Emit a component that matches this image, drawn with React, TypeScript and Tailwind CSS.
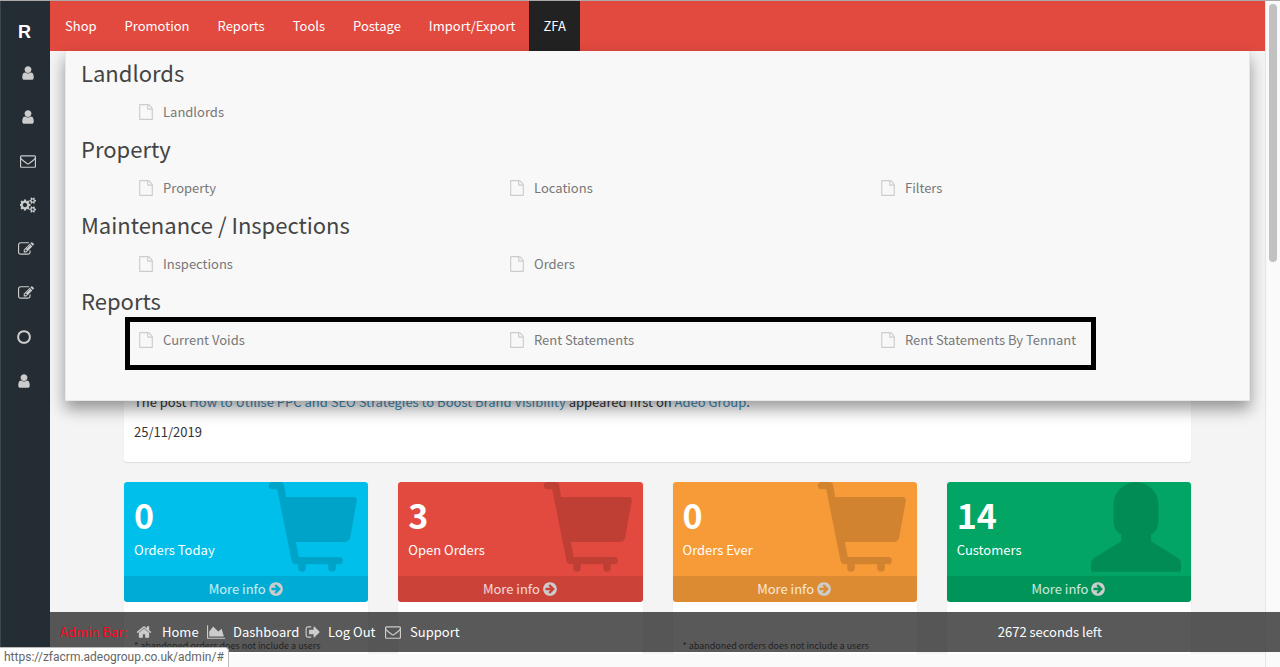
import React, { FC } from 'react'


// icon paths
const paths = {
  user: 'M1536 1399q0 109-62.5 187t-150.5 78h-854q-88 0-150.5-78t-62.5-187q0-85 8.5-160.5t31.5-152 58.5-131 94-89 134.5-34.5q131 128 313 128t313-128q76 0 134.5 34.5t94 89 58.5 131 31.5 152 8.5 160.5zm-256-887q0 159-112.5 271.5t-271.5 112.5-271.5-112.5-112.5-271.5 112.5-271.5 271.5-112.5 271.5 112.5 112.5 271.5z',
  envelope: 'M1664 1504v-768q-32 36-69 66-268 206-426 338-51 43-83 67t-86.5 48.5-102.5 24.5h-2q-48 0-102.5-24.5t-86.5-48.5-83-67q-158-132-426-338-37-30-69-66v768q0 13 9.5 22.5t22.5 9.5h1472q13 0 22.5-9.5t9.5-22.5zm0-1051v-24.5l-.5-13-3-12.5-5.5-9-9-7.5-14-2.5h-1472q-13 0-22.5 9.5t-9.5 22.5q0 168 147 284 193 152 401 317 6 5 35 29.5t46 37.5 44.5 31.5 50.5 27.5 43 9h2q20 0 43-9t50.5-27.5 44.5-31.5 46-37.5 35-29.5q208-165 401-317 54-43 100.5-115.5t46.5-131.5zm128-37v1088q0 66-47 113t-113 47h-1472q-66 0-113-47t-47-113v-1088q0-66 47-113t113-47h1472q66 0 113 47t47 113z',
  cogs: 'M832 896q0-106-75-181t-181-75-181 75-75 181 75 181 181 75 181-75 75-181zm768 512q0-52-38-90t-90-38-90 38-38 90q0 53 37.5 90.5t90.5 37.5 90.5-37.5 37.5-90.5zm0-1024q0-52-38-90t-90-38-90 38-38 90q0 53 37.5 90.5t90.5 37.5 90.5-37.5 37.5-90.5zm-384 421v185q0 10-7 19.5t-16 10.5l-155 24q-11 35-32 76 34 48 90 115 7 11 7 20 0 12-7 19-23 30-82.5 89.5t-78.5 59.5q-11 0-21-7l-115-90q-37 19-77 31-11 108-23 155-7 24-30 24h-186q-11 0-20-7.5t-10-17.5l-23-153q-34-10-75-31l-118 89q-7 7-20 7-11 0-21-8-144-133-144-160 0-9 7-19 10-14 41-53t47-61q-23-44-35-82l-152-24q-10-1-17-9.5t-7-19.5v-185q0-10 7-19.5t16-10.5l155-24q11-35 32-76-34-48-90-115-7-11-7-20 0-12 7-20 22-30 82-89t79-59q11 0 21 7l115 90q34-18 77-32 11-108 23-154 7-24 30-24h186q11 0 20 7.5t10 17.5l23 153q34 10 75 31l118-89q8-7 20-7 11 0 21 8 144 133 144 160 0 8-7 19-12 16-42 54t-45 60q23 48 34 82l152 23q10 2 17 10.5t7 19.5zm640 533v140q0 16-149 31-12 27-30 52 51 113 51 138 0 4-4 7-122 71-124 71-8 0-46-47t-52-68q-20 2-30 2t-30-2q-14 21-52 68t-46 47q-2 0-124-71-4-3-4-7 0-25 51-138-18-25-30-52-149-15-149-31v-140q0-16 149-31 13-29 30-52-51-113-51-138 0-4 4-7 4-2 35-20t59-34 30-16q8 0 46 46.5t52 67.5q20-2 30-2t30 2q51-71 92-112l6-2q4 0 124 70 4 3 4 7 0 25-51 138 17 23 30 52 149 15 149 31zm0-1024v140q0 16-149 31-12 27-30 52 51 113 51 138 0 4-4 7-122 71-124 71-8 0-46-47t-52-68q-20 2-30 2t-30-2q-14 21-52 68t-46 47q-2 0-124-71-4-3-4-7 0-25 51-138-18-25-30-52-149-15-149-31v-140q0-16 149-31 13-29 30-52-51-113-51-138 0-4 4-7 4-2 35-20t59-34 30-16q8 0 46 46.5t52 67.5q20-2 30-2t30 2q51-71 92-112l6-2q4 0 124 70 4 3 4 7 0 25-51 138 17 23 30 52 149 15 149 31z',
  edit: 'M888 1184l116-116-152-152-116 116v56h96v96h56zm440-720q-16-16-33 1l-350 350q-17 17-1 33t33-1l350-350q17-17 1-33zm80 594v190q0 119-84.5 203.5t-203.5 84.5h-832q-119 0-203.5-84.5t-84.5-203.5v-832q0-119 84.5-203.5t203.5-84.5h832q63 0 117 25 15 7 18 23 3 17-9 29l-49 49q-14 14-32 8-23-6-45-6h-832q-66 0-113 47t-47 113v832q0 66 47 113t113 47h832q66 0 113-47t47-113v-126q0-13 9-22l64-64q15-15 35-7t20 29zm-96-738l288 288-672 672h-288v-288zm444 132l-92 92-288-288 92-92q28-28 68-28t68 28l152 152q28 28 28 68t-28 68z',
  circle: 'M896 352q-148 0-273 73t-198 198-73 273 73 273 198 198 273 73 273-73 198-198 73-273-73-273-198-198-273-73zm768 544q0 209-103 385.5t-279.5 279.5-385.5 103-385.5-103-279.5-279.5-103-385.5 103-385.5 279.5-279.5 385.5-103 385.5 103 279.5 279.5 103 385.5z',
  file: 'M1596 380q28 28 48 76t20 88v1152q0 40-28 68t-68 28h-1344q-40 0-68-28t-28-68v-1600q0-40 28-68t68-28h896q40 0 88 20t76 48zm-444-244v376h376q-10-29-22-41l-313-313q-12-12-41-22zm384 1528v-1024h-416q-40 0-68-28t-28-68v-416h-768v1536h1280z',
  arrow: 'M1413 896q0-27-18-45l-91-91-362-362q-18-18-45-18t-45 18l-91 91q-18 18-18 45t18 45l189 189h-502q-26 0-45 19t-19 45v128q0 26 19 45t45 19h502l-189 189q-19 19-19 45t19 45l91 91q18 18 45 18t45-18l362-362 91-91q18-18 18-45zm251 0q0 209-103 385.5t-279.5 279.5-385.5 103-385.5-103-279.5-279.5-103-385.5 103-385.5 279.5-279.5 385.5-103 385.5 103 279.5 279.5 103 385.5z',
  home: 'M1472 992v480q0 26-19 45t-45 19h-384v-384h-256v384h-384q-26 0-45-19t-19-45v-480q0-1 .5-3t.5-3l575-474 575 474q1 2 1 6zm223-69l-62 74q-8 9-21 11h-3q-13 0-21-7l-692-577-692 577q-12 8-24 7-13-2-21-11l-62-74q-8-10-7-23.5t11-21.5l719-599q32-26 76-26t76 26l244 204v-195q0-14 9-23t23-9h192q14 0 23 9t9 23v408l219 182q10 8 11 21.5t-7 23.5z',
  chart: 'M2048 1536v128h-2048v-1536h128v1408h1920zm-384-1024l256 896h-1664v-576l448-576 576 576z',
  signOut: 'M704 1440q0 4 1 20t.5 26.5-3 23.5-10 19.5-20.5 6.5h-320q-119 0-203.5-84.5t-84.5-203.5v-704q0-119 84.5-203.5t203.5-84.5h320q13 0 22.5 9.5t9.5 22.5q0 4 1 20t.5 26.5-3 23.5-10 19.5-20.5 6.5h-320q-66 0-113 47t-47 113v704q0 66 47 113t113 47h312l11.5 1 11.5 3 8 5.5 7 9 2 13.5zm928-544q0 26-19 45l-544 544q-19 19-45 19t-45-19-19-45v-288h-448q-26 0-45-19t-19-45v-384q0-26 19-45t45-19h448v-288q0-26 19-45t45-19 45 19l544 544q19 19 19 45z',
  bigCart: 'M11 0H34Q44 0 46 10L52 45H254Q265 45 264 57L244 167Q240 180 228 180H81L90 225H211a11 11 0 0 1 0 22h-10v11a11 11 0 0 1-23 0v-11h-67v11a11 11 0 0 1-23 0v-11h-6q-12 0-14-11L25 22H11a11 11 0 0 1 0-22Z',
  bigUser: 'M135 0C173 0 203 30 203 68V115C203 135 195 152 181 157V178L262 228Q271 234 271 244V262Q271 270 263 270H8Q0 270 0 262V244Q0 236 9 228L91 178V157C76 152 68 135 68 115V68C68 30 98 0 135 0Z',
}

// props
type IconProps = {
  name: keyof typeof paths;
  className?: string;
  viewBox?: string;
}

type CardProps = {
  value: number;
  label: string;
  color: string;
  icon: 'bigCart' | 'bigUser';
  note?: boolean;
}

const sideIcons: { name: keyof typeof paths; label: string; offset: string }[] = [
  { name: 'user', label: 'Customers', offset: 'pl-[19px]' },
  { name: 'user', label: 'Users', offset: 'pl-[19px]' },
  { name: 'envelope', label: 'Messages', offset: 'pl-[19px]' },
  { name: 'cogs', label: 'Settings', offset: 'pl-[19px]' },
  { name: 'edit', label: 'Edit pages', offset: 'pl-[17px]' },
  { name: 'edit', label: 'Edit posts', offset: 'pl-[17px]' },
  { name: 'circle', label: 'Status', offset: 'pl-[15px]' },
  { name: 'user', label: 'Profile', offset: 'pl-[15px]' },
]

const navItems = ['Shop', 'Promotion', 'Reports', 'Tools', 'Postage', 'Import/Export', 'ZFA']

const sections = [
  { title: 'Landlords', links: ['Landlords'] },
  { title: 'Property', links: ['Property', 'Locations', 'Filters'] },
  { title: 'Maintenance / Inspections', links: ['Inspections', 'Orders'] },
  { title: 'Reports', links: ['Current Voids', 'Rent Statements', 'Rent Statements By Tennant'], outlined: true },
]

const cards: CardProps[] = [
  { value: 0, label: 'Orders Today', color: 'bg-[#00c0eb]', icon: 'bigCart', note: true },
  { value: 3, label: 'Open Orders', color: 'bg-[#e24a3f]', icon: 'bigCart' },
  { value: 0, label: 'Orders Ever', color: 'bg-[#f79b38]', icon: 'bigCart', note: true },
  { value: 14, label: 'Customers', color: 'bg-[#02a564]', icon: 'bigUser' },
]


const Icon: FC<IconProps> = ({ name, className = 'size-4', viewBox = '0 0 1792 1792' }) => (
  <svg viewBox={viewBox} className={`shrink-0 fill-current ${className}`} aria-hidden="true">
    <path d={paths[name]} />
  </svg>
)


const Sidebar: FC = () => (
  <aside className="w-[50px] shrink-0 border-l border-[#3a464c] bg-[#232d33] text-[#ccc]">
    <a href="#" className="flex h-[50px] items-end pl-[17px] pb-[5px] font-['Liberation_Sans',sans-serif] text-lg font-bold text-white">R</a>
    {
      sideIcons.map((item) => (
        <a key={item.label} href="#" aria-label={item.label} className={`flex h-11 items-center ${item.offset}`}>
          <Icon name={item.name} viewBox={item.name === 'cogs' ? '0 0 1856 1792' : undefined} />
        </a>
      ))
    }
  </aside>
)


const MegaMenu: FC = () => (
  <div className="absolute inset-x-[15px] top-full z-10 h-[350px] border border-t-0 border-[#e7e7e7] bg-[#f8f8f8] pt-1.5 shadow-[0_8px_15px_rgba(0,0,0,0.4)]">
    {
      sections.map((section) => (
        <section key={section.title} className="h-[76px]">
          <h3 className="mb-0.5 pl-[15px] text-[22px] leading-[30px] text-[#444]">{section.title}</h3>
          <ul className="relative mr-3 ml-[58px] grid grid-cols-3 pt-[13px]">
            {
              section.links.map((link) => (
                <li key={link} className="px-3.5">
                  <a href="#" className="flex items-center gap-[9px] text-[#777]">
                    <Icon name="file" className="size-4 text-[#ccc]" />
                    {link}
                  </a>
                </li>
              ))
            }
            {section.outlined && <li aria-hidden="true" className="absolute top-0 right-[141px] left-px h-[53px] border-5 border-black"></li>}
          </ul>
        </section>
      ))
    }
  </div>
)


const Card: FC<CardProps> = ({ value, label, color, icon, note }) => (
  <div className="flex flex-col bg-white shadow-[0_1px_1px_rgba(0,0,0,0.1)]">
    <div className={`relative rounded-[3px] text-white ${color}`}>
      <div className="h-[94px] px-2.5 pt-2">
        <p className="text-[34px] leading-[50px] font-bold">{value}</p>
        <p className="leading-5">{label}</p>
      </div>
      <Icon
        name={icon}
        viewBox={icon === 'bigCart' ? '0 0 265 270' : '0 0 271 270'}
        className="absolute top-0 right-2.5 h-[90px] w-[90px] text-black/15"
      />
      <a href="#" className="flex h-[26px] items-center justify-center gap-0.5 rounded-b-[3px] bg-black/10 text-white/80">
        More info <Icon name="arrow" className="size-4 text-[#ccc]" />
      </a>
    </div>
    {note && <p className="px-2.5 pt-9 text-[9px] leading-4 text-[#222]">* abandoned orders does not include a users</p>}
  </div>
)


const AdminBar: FC = () => (
  <footer className="absolute right-0 bottom-[15px] left-[50px] z-20 flex h-10 items-center bg-[#212121]/75 pl-2.5 text-white">
    <span className="w-[76px] text-[#f9061c]">Admin Bar:</span>
    <a href="#" className="flex w-[71px] items-center gap-2.5">
      <Icon name="home" className="size-4 text-[#ccc]" /> Home
    </a>
    <a href="#" className="flex w-[98px] items-center gap-2 whitespace-nowrap">
      <Icon name="chart" className="h-4 w-[18px] text-[#ccc]" viewBox="0 0 2048 1792" /> Dashboard
    </a>
    <a href="#" className="flex w-20 items-center gap-[7px] whitespace-nowrap">
      <Icon name="signOut" className="size-4 text-[#ccc]" /> Log Out
    </a>
    <a href="#" className="flex items-center gap-[9px]">
      <Icon name="envelope" className="size-4 text-[#ccc]" /> Support
    </a>
    <span className="ml-auto pr-[178px]">2672 seconds left</span>
  </footer>
)


const App: FC = () => {
  return (
    <div className="relative flex h-screen overflow-hidden border-t border-[#aaa] bg-[#f4f4f4] font-['Noto_Sans_CJK_SC',sans-serif] text-[13px] leading-5 text-[#333]">
      <Sidebar />

      <div className="flex min-w-0 flex-1 flex-col">
        <header className="relative h-[50px] shrink-0 bg-[#e24a3f] text-white">
          <nav className="flex h-full pl-px">
            {
              navItems.map((item) => (
                <a
                  key={item}
                  href="#"
                  className={`flex items-center px-3.5 ${item === 'ZFA' ? 'bg-[#222]' : ''}`}
                >
                  {item}
                </a>
              ))
            }
          </nav>
          <MegaMenu />
        </header>

        <main className="flex flex-1 flex-col px-[74px]">
          <article className="flex h-[411px] shrink-0 flex-col justify-end gap-2.5 rounded-b-[3px] bg-white px-2.5 pb-5 shadow-[0_1px_1px_rgba(0,0,0,0.1)]">
            <p>
              The post <a href="#" className="text-[#3c8dbc]">How to Utilise PPC and SEO Strategies to Boost Brand Visibility</a> appeared first on <a href="#" className="text-[#3c8dbc]">Adeo Group</a>.
            </p>
            <p>25/11/2019</p>
          </article>
          <div className="mt-5 grid flex-1 grid-cols-4 gap-[30px]">
            {cards.map((card) => <Card key={card.label} {...card} />)}
          </div>
        </main>

        <div className="h-[15px] shrink-0 border-b border-[#eee] bg-[#fafafa]"></div>
      </div>

      {/* scroll track */}
      <div className="flex w-[15px] shrink-0 justify-center border-l border-[#e6e6e6] bg-[#fafafa] pt-[3px]">
        <div className="h-[258px] w-2 rounded-full bg-[#c1c1c1]"></div>
      </div>

      <AdminBar />

      <div className="absolute bottom-0 left-0 z-30 h-5 rounded-tr border-t border-r border-[#bbb] bg-white px-1 font-[Roboto,sans-serif] text-xs leading-[19px] text-[#666]">
        https://zfacrm.adeogroup.co.uk/admin/#
      </div>
    </div>
  )
}

export default App
